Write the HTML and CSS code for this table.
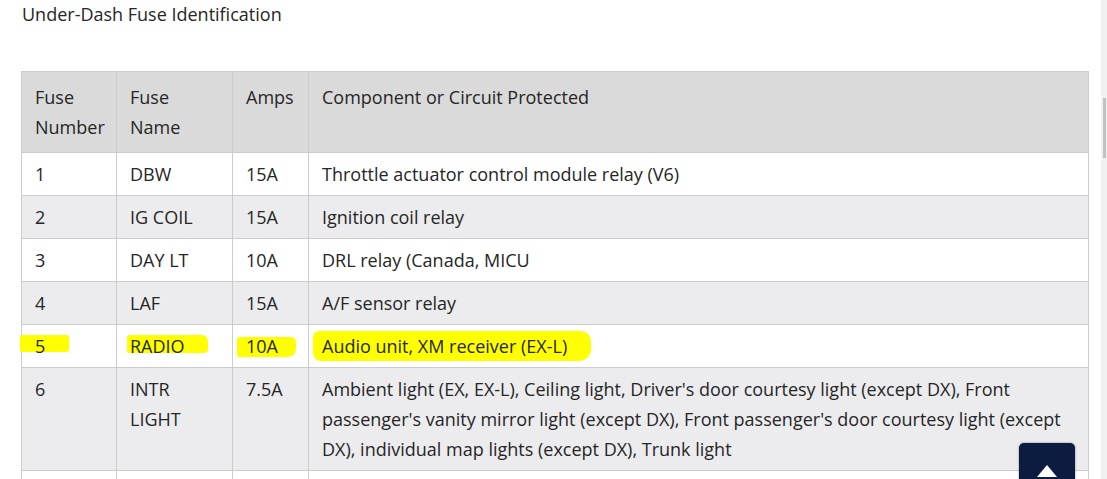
FILE: index.html
```html
<!DOCTYPE html>
<html>
<head>
<meta charset="utf-8">
<link rel="stylesheet" href="styles.css">
</head>
<body>
<div class="page">
  <h3 class="title">Under-Dash Fuse Identification</h3>
  <table class="fuses">
    <colgroup>
      <col class="c1"><col class="c2"><col class="c3"><col class="c4">
    </colgroup>
    <thead>
      <tr><th>Fuse<br>Number</th><th>Fuse<br>Name</th><th>Amps</th><th>Component or Circuit Protected</th></tr>
    </thead>
    <tbody>
      <tr><td>1</td><td>DBW</td><td>15A</td><td>Throttle actuator control module relay (V6)</td></tr>
      <tr class="alt"><td>2</td><td>IG COIL</td><td>15A</td><td>Ignition coil relay</td></tr>
      <tr><td>3</td><td>DAY LT</td><td>10A</td><td>DRL relay (Canada, MICU</td></tr>
      <tr class="alt"><td>4</td><td>LAF</td><td>15A</td><td>A/F sensor relay</td></tr>
      <tr class="hl-row">
        <td><span class="mark m1"></span><span class="txt">5</span></td>
        <td><span class="mark m2"></span><span class="txt">RADIO</span></td>
        <td><span class="mark m3"></span><span class="txt">10A</span></td>
        <td><span class="mark m4"></span><span class="txt">Audio unit, XM receiver (EX-L)</span></td>
      </tr>
      <tr class="alt"><td>6</td><td>INTR<br>LIGHT</td><td>7.5A</td><td>Ambient light (EX, EX-L), Ceiling light, Driver's door courtesy light (except DX), Front passenger's vanity mirror light (except DX), Front passenger's door courtesy light (except DX), individual map lights (except DX), Trunk light</td></tr>
      <tr><td>&nbsp;</td><td></td><td></td><td></td></tr>
    </tbody>
  </table>
</div>
<button class="to-top" aria-label="Back to top">
  <svg width="20" height="12" viewBox="0 0 20 12"><polygon points="10,0 20,12 0,12" fill="#ffffff"/></svg>
</button>
<div class="scrollbar"><div class="thumb"></div></div>
</body>
</html>
```

FILE: styles.css
```css
html, body {
  margin: 0;
  padding: 0;
  background: #ffffff;
  overflow: hidden;
}
body {
  font-family: "Open Sans", "Noto Sans", sans-serif;
  color: #262626;
  font-size: 18px;
}
.page {
  padding: 0 18px 0 21px;
}
.title {
  margin: 0;
  padding-top: 1px;
  font-weight: 400;
  font-size: 18px;
  line-height: 26px;
  height: 70px;
  padding-left: 1px;
}
.fuses {
  border-collapse: collapse;
  width: 1068px;
  table-layout: fixed;
}
.c1 { width: 95px; }
.c2 { width: 116px; }
.c3 { width: 76px; }
.fuses th, .fuses td {
  border: 1px solid #cccccc;
  text-align: left;
  vertical-align: top;
  line-height: 30px;
  padding: 6px 13px;
  font-weight: 400;
}
.fuses th {
  background: #dadada;
  padding-top: 10px;
  padding-bottom: 10px;
}
.fuses tr.alt td {
  background: #ececee;
}
.hl-row td {
  position: relative;
}
.txt {
  position: relative;
}
.mark {
  position: absolute;
  background: #ffff00;
}
.m1 { left: -2px; top: 10px; width: 49px; height: 17px; border-radius: 2px; }
.m2 { left: 10px; top: 10px; width: 81px; height: 18px; border-radius: 3px 6px 4px 2px; }
.m3 { left: 4px; top: 12px; width: 59px; height: 20px; border-radius: 3px 5px 8px 2px; }
.m4 { left: 4px; top: 6px; width: 278px; height: 30px; border-radius: 6px 10px 12px 8px; }
.to-top {
  position: fixed;
  left: 1019px;
  top: 443px;
  width: 56px;
  height: 50px;
  border: none;
  border-radius: 5px;
  background: #0c1c40;
  box-shadow: 0 0 2px rgba(0,0,0,0.5);
  padding: 0;
  display: flex;
  justify-content: center;
  align-items: flex-start;
  padding-top: 22px;
}
.scrollbar {
  position: fixed;
  right: 0;
  top: 0;
  width: 6px;
  height: 479px;
  background: #f1f1f1;
}
.thumb {
  position: absolute;
  left: 2px;
  top: 98px;
  width: 3px;
  height: 60px;
  background: #c1c1c1;
}
```
